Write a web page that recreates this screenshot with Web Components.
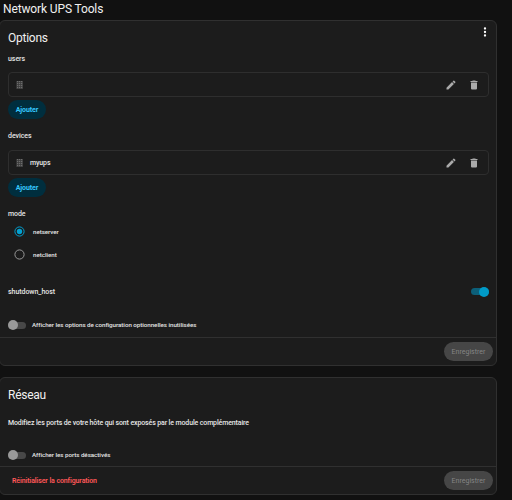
<!DOCTYPE html>
<html lang="fr">
<head>
<meta charset="utf-8">
<title>Network UPS Tools</title>
<style>
html,body{margin:0;height:500px;overflow:hidden;background:#111;color:#e6e6e6;font-family:Roboto,"Noto Sans",sans-serif}
</style>
</head>
<body>
<addon-page></addon-page>
<script>
function define(name, html) {
  const t = document.createElement('template');
  t.innerHTML = html;
  customElements.define(name, class extends HTMLElement {
    constructor() {
      super();
      this.attachShadow({mode: 'open'}).append(t.content.cloneNode(true));
    }
  });
}

define('config-card', `<style>
:host{display:flex;flex-direction:column;box-sizing:border-box;width:498px;margin-left:-1px;border:1px solid #303030;border-radius:6px;background:#1c1c1c}
.body{flex:1;padding:0 7px 0 8px}
footer{display:flex;align-items:center;justify-content:space-between;box-sizing:border-box;height:28px;border-top:1px solid #303030;padding:0 3px 0 12px}
.start{display:flex;align-items:center}
</style><div class="body"><slot></slot></div><footer><div class="start"><slot name="start"></slot></div><slot name="end"></slot></footer>`);

define('card-header', `<style>
:host{display:flex;justify-content:space-between;height:34px;line-height:34px;font-size:12px;letter-spacing:-.26px}
svg{width:14px;height:14px;margin:4px -3px 0 0;fill:#fff}
:host([plain]) svg{display:none}
</style><span><slot></slot></span><svg viewBox="0 0 24 24"><path d="M12 16a2 2 0 1 1 0 4 2 2 0 0 1 0-4m0-6a2 2 0 1 1 0 4 2 2 0 0 1 0-4m0-6a2 2 0 1 1 0 4 2 2 0 0 1 0-4"/></svg>`);

define('field-label', `<style>
:host{display:block;height:10px;line-height:10px;font-size:7px;font-weight:500;letter-spacing:-.06px;white-space:nowrap}
</style><slot></slot>`);

define('item-row', `<style>
:host{display:flex;align-items:center;box-sizing:border-box;height:25px;border:1px solid #2e2e2e;border-radius:4px;padding:0 8px 0 5px;font-size:7px;font-weight:500;letter-spacing:-.1px}
svg{width:12px;height:12px;fill:#aaa}
.grip{width:12px;height:12px;fill:#6c6c6c}
span{flex:1;padding-left:4px}
.edit{margin-right:11.500px}
</style>
<svg class="grip" viewBox="0 0 24 24"><path d="M6 4h3v3H6zm4 0h3v3h-3zm4 0h3v3h-3zM6 8h3v3H6zm4 0h3v3h-3zm4 0h3v3h-3zM6 12h3v3H6zm4 0h3v3h-3zm4 0h3v3h-3zM6 16h3v3H6zm4 0h3v3h-3zm4 0h3v3h-3z"/><path fill="#4a4a4a" d="M5 4h1v16H5zm4 0h1v16H9zm4 0h1v16h-1zm4 0h1v16h-1z"/></svg>
<span><slot></slot></span>
<svg class="edit" viewBox="0 0 24 24"><path d="M20.71 7.04c.39-.39.39-1.04 0-1.41l-2.34-2.34c-.37-.39-1.02-.39-1.41 0l-1.84 1.83 3.75 3.75M3 17.25V21h3.75L17.81 9.93l-3.75-3.75z"/></svg>
<svg viewBox="0 0 24 24"><path d="M19 4h-3.500l-1-1h-5l-1 1H5v2h14M6 19a2 2 0 0 0 2 2h8a2 2 0 0 0 2-2V7H6z"/></svg>`);

define('pill-button', `<style>
:host{display:flex;align-items:center;justify-content:center;box-sizing:border-box;width:38px;height:19px;border-radius:10px;background:#002e3e;color:#37c8fd;font-size:7px;font-weight:700;letter-spacing:-.06px}
:host([disabled]){width:49px;background:#464646;color:#858585;font-weight:400;letter-spacing:0}
</style><slot></slot>`);

define('radio-option', `<style>
:host{display:flex;align-items:center;height:23px;padding-left:6px;font-size:6.200px;font-weight:500;letter-spacing:-.04px}
svg{width:11px;height:11px;margin-right:8px;fill:none;stroke:#999}
circle+circle{display:none}
:host([checked]) svg{stroke:#03a0d0}
:host([checked]) circle+circle{display:block;fill:#03a0d0;stroke:none}
</style><svg viewBox="0 0 11 11"><circle cx="5.500" cy="5.500" r="4.600"/><circle cx="5.500" cy="5.500" r="2.700"/></svg><slot></slot>`);

define('toggle-switch', `<style>
:host{display:flex;align-items:center;width:18px;height:10px;flex:none}
div{display:flex;align-items:center;width:18px;height:7px;border-radius:4px;background:#484848}
i{width:10px;height:10px;border-radius:50%;background:#999}
:host([checked]) div{background:#0c5f79;justify-content:flex-end}
:host([checked]) i{background:#009ac7}
</style><div><i></i></div>`);

define('toggle-line', `<style>
:host{display:flex;align-items:center;height:10px;gap:6px;font-size:6.200px;font-weight:500;letter-spacing:-.03px;white-space:nowrap}
</style><toggle-switch></toggle-switch><slot></slot>`);

define('setting-line', `<style>
:host{display:flex;align-items:center;justify-content:space-between;height:10px;font-size:7px;font-weight:500;letter-spacing:-.05px}
</style><slot></slot><toggle-switch checked></toggle-switch>`);

define('addon-page', `<style>
:host{display:block;height:500px}
h1{margin:0;height:20px;line-height:18px;padding-left:3px;font-size:12px;letter-spacing:-.13px;font-weight:400}
.options{height:346px}
.network{height:118px;margin-top:11px}
card-header,h1{color:#f0f0f0}
.users{margin-top:-1px}
item-row{margin-top:8px}
.devices,.mode{margin-top:12px}
.devices+item-row{margin-top:9px}
pill-button.add{margin-top:3px}
radio-option:first-of-type{margin-top:1px}
setting-line{margin-top:20.500px}
.unused{margin-top:23.500px}
.text{margin-top:6px;letter-spacing:-.13px}
.ports{margin-top:22px}
.reset{color:#ff5858;font-size:7px;font-weight:600;letter-spacing:-.11px}
</style>
<h1>Network UPS Tools</h1>
<config-card class="options">
<card-header>Options</card-header>
<field-label class="users">users</field-label>
<item-row></item-row>
<pill-button class="add">Ajouter</pill-button>
<field-label class="devices">devices</field-label>
<item-row>myups</item-row>
<pill-button class="add">Ajouter</pill-button>
<field-label class="mode">mode</field-label>
<radio-option checked>netserver</radio-option>
<radio-option>netclient</radio-option>
<setting-line>shutdown_host</setting-line>
<toggle-line class="unused">Afficher les options de configuration optionnelles inutilisées</toggle-line>
<pill-button slot="end" disabled>Enregistrer</pill-button>
</config-card>
<config-card class="network">
<card-header plain>Réseau</card-header>
<field-label class="text">Modifiez les ports de votre hôte qui sont exposés par le module complémentaire</field-label>
<toggle-line class="ports">Afficher les ports désactivés</toggle-line>
<span slot="start" class="reset">Réinitialiser la configuration</span>
<pill-button slot="end" disabled>Enregistrer</pill-button>
</config-card>`);
</script>
</body>
</html>
